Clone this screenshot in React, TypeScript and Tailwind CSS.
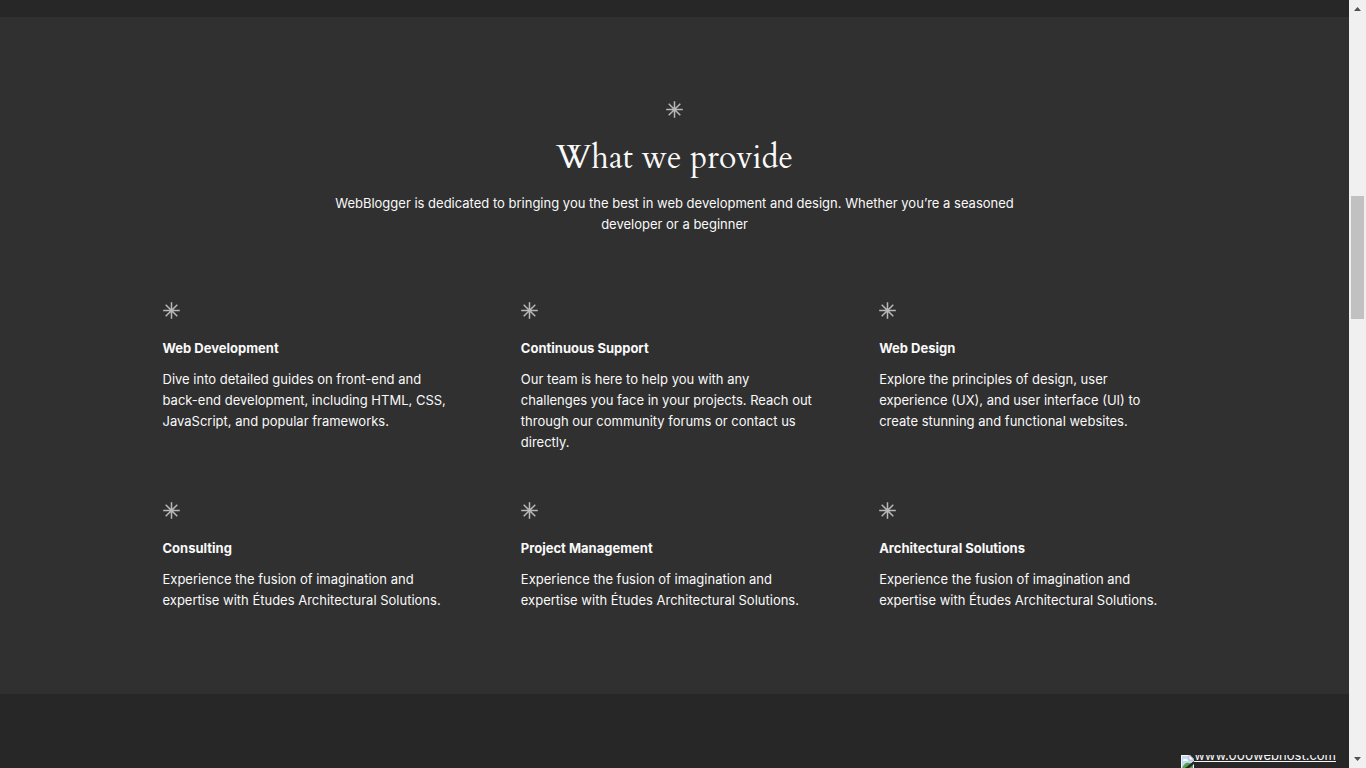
const services = [
  {
    title: "Web Development",
    text: "Dive into detailed guides on front-end and back-end development, including HTML, CSS, JavaScript, and popular frameworks.",
  },
  {
    title: "Continuous Support",
    text: "Our team is here to help you with any challenges you face in your projects. Reach out through our community forums or contact us directly.",
  },
  {
    title: "Web Design",
    text: "Explore the principles of design, user experience (UX), and user interface (UI) to create stunning and functional websites.",
  },
  {
    title: "Consulting",
    text: "Experience the fusion of imagination and expertise with Études Architectural Solutions.",
  },
  {
    title: "Project Management",
    text: "Experience the fusion of imagination and expertise with Études Architectural Solutions.",
  },
  {
    title: "Architectural Solutions",
    text: "Experience the fusion of imagination and expertise with Études Architectural Solutions.",
  },
];

function Asterisk() {
  return (
    <svg
      className="block h-[17px] w-[17px] text-[#b8b8b8]"
      viewBox="0 0 17 17"
      fill="none"
      stroke="currentColor"
      strokeWidth="1.5"
      aria-hidden="true"
    >
      <path d="M8.5 0.2v16.6M0.2 8.5h16.6M2.7 2.7l11.6 11.6M14.3 2.7L2.7 14.3" />
    </svg>
  );
}

function BrokenImage() {
  return (
    <svg className="block h-4 w-[13px] shrink-0" viewBox="0 0 13 16" aria-hidden="true">
      <path d="M0 0h9l4 4v12H0z" fill="#f4f6f8" />
      <path d="M1 1h7v4h4v10H1z" fill="#c3d9f3" />
      <path d="M8 0l5 5H8z" fill="#fff" stroke="#9aa0a6" strokeWidth="0.6" />
      <path d="M2 5q1-2 3-1q2 0 2 2H2z" fill="#fff" />
      <path d="M1 13q3-6 7-5l4 1v6H1z" fill="#53a347" />
      <path d="M4 13l9-7v3l-7 6z" fill="#282828" />
    </svg>
  );
}

function Scrollbar() {
  return (
    <div className="flex w-[17px] shrink-0 flex-col items-center bg-[#f0f0f0]" aria-hidden="true">
      <svg className="block h-[17px] w-[17px] shrink-0" viewBox="0 0 17 17">
        <path d="M5 11l3.5-4L12 11z" fill="#505050" />
      </svg>
      <div className="flex w-full grow flex-col items-center">
        <div className="grow-[179]" />
        <div className="w-[13px] grow-[123] bg-[#c1c1c1]" />
        <div className="grow-[432]" />
      </div>
      <svg className="block h-[17px] w-[17px] shrink-0" viewBox="0 0 17 17">
        <path d="M5 6l3.5 4L12 6z" fill="#505050" />
      </svg>
    </div>
  );
}

export default function App() {
  return (
    <div className="flex h-screen overflow-hidden bg-[#272727] font-['Inter',sans-serif] text-[13px] leading-[21px] text-[#f9f9f9]">
      <main className="relative min-w-0 flex-1 overflow-hidden pt-[17px]">
        <section className="bg-[#303030] px-12 pt-[84px] pb-[83px]">
          <header className="mx-auto flex max-w-[704px] flex-col items-center text-center">
            <Asterisk />
            <h2 className="mt-5 font-['Cardo','Liberation_Serif',serif] text-[32px] leading-10">
              What we provide
            </h2>
            <p className="mt-[15px]">
              WebBlogger is dedicated to bringing you the best in web development and design. Whether
              you’re a seasoned developer or a beginner
            </p>
          </header>
          <div className="mx-auto mt-[67px] grid max-w-[1024px] grid-cols-3 gap-x-[51px] gap-y-[49px]">
            {services.map((service) => (
              <article key={service.title}>
                <Asterisk />
                <h3 className="mt-[19px] font-bold">{service.title}</h3>
                <p className="mt-2.5 max-w-[294px]">{service.text}</p>
              </article>
            ))}
          </div>
        </section>
        <a
          href="https://www.000webhost.com"
          className="absolute right-[13px] bottom-0 flex h-[13px] items-start overflow-hidden underline"
        >
          <BrokenImage />
          <span className="-mt-2.5">www.000webhost.com</span>
        </a>
      </main>
      <Scrollbar />
    </div>
  );
}
